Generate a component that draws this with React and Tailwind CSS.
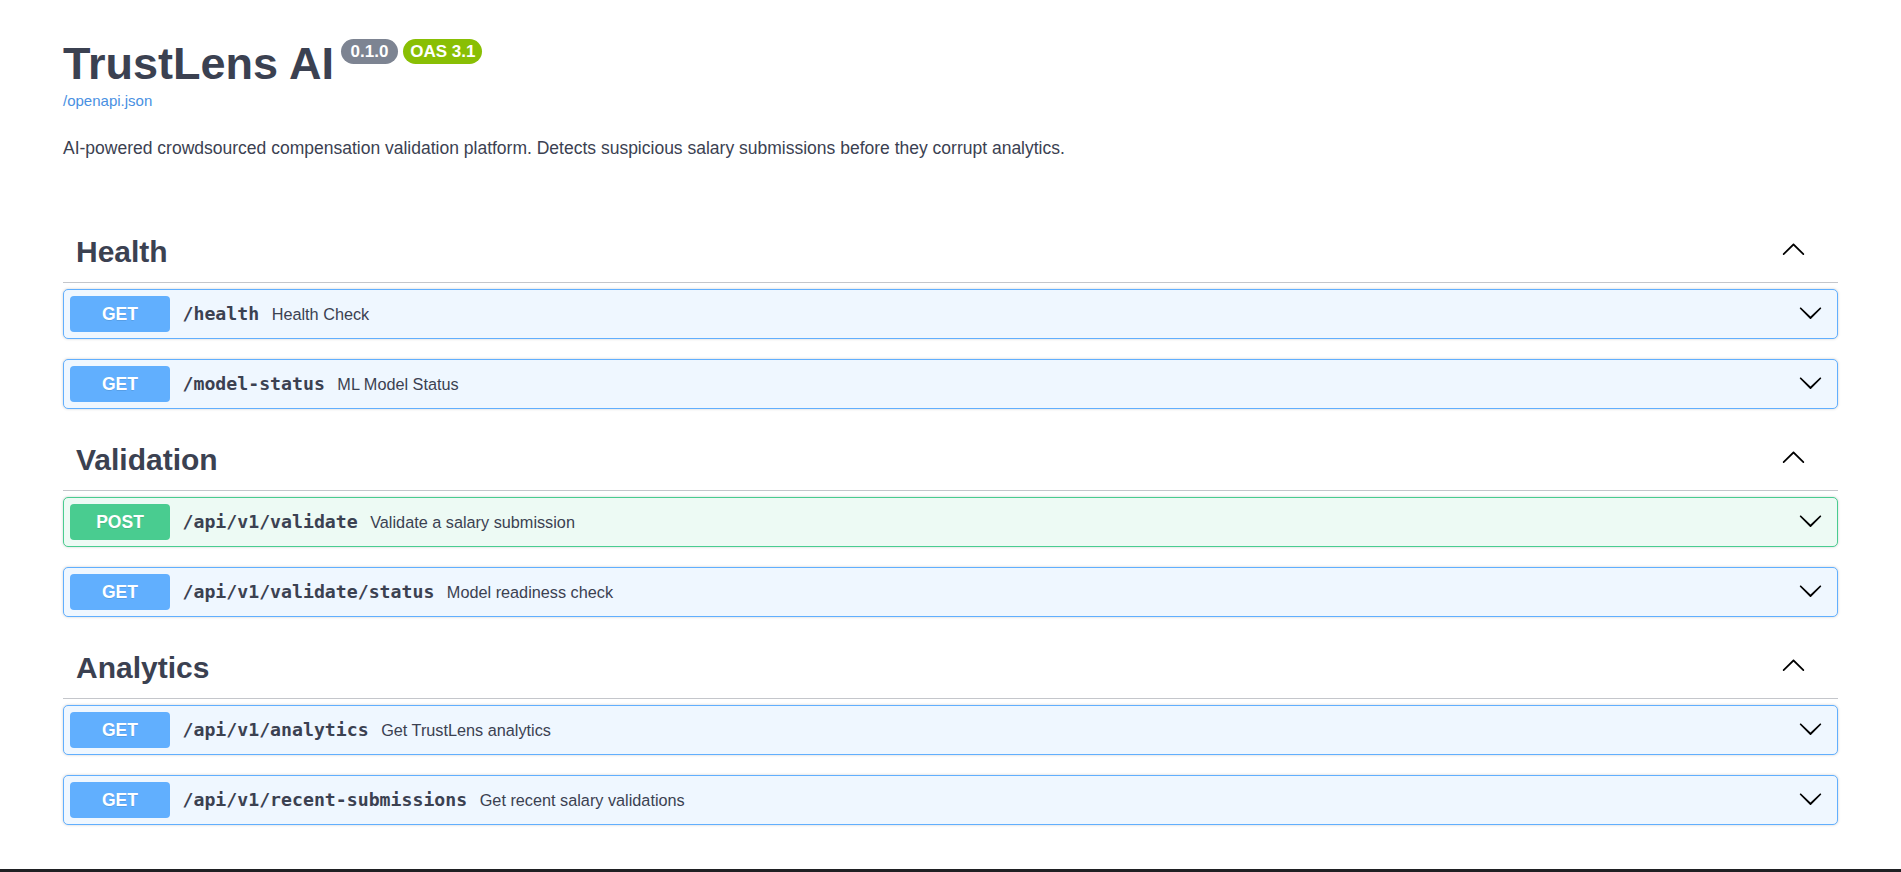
import React from 'react';

// swagger-style docs page for the TrustLens API
const sections = [
  {
    name: 'Health',
    ops: [
      { method: 'GET', path: '/health', summary: 'Health Check' },
      { method: 'GET', path: '/model-status', summary: 'ML Model Status' },
    ],
  },
  {
    name: 'Validation',
    ops: [
      { method: 'POST', path: '/api/v1/validate', summary: 'Validate a salary submission' },
      { method: 'GET', path: '/api/v1/validate/status', summary: 'Model readiness check' },
    ],
  },
  {
    name: 'Analytics',
    ops: [
      { method: 'GET', path: '/api/v1/analytics', summary: 'Get TrustLens analytics' },
      { method: 'GET', path: '/api/v1/recent-submissions', summary: 'Get recent salary validations' },
    ],
  },
];

const ArrowDown = ({ className }) => (
  <svg width="25" height="25" viewBox="0 0 20 20" className={className}>
    <path
      fill="#000"
      d="M17.418 6.109c.272-.268.709-.268.979 0s.271.701 0 .969l-7.908 7.83c-.27.268-.707.268-.979 0l-7.908-7.83c-.27-.268-.27-.701 0-.969.271-.268.709-.268.979 0L10 13.25l7.418-7.141z"
    />
  </svg>
);

const ArrowUp = ({ className }) => (
  <svg width="25" height="25" viewBox="0 0 20 20" className={className}>
    <path
      fill="#000"
      d="M17.418 14.908c.272.268.709.268.979 0s.271-.701 0-.969l-7.908-7.83c-.27-.268-.707-.268-.979 0l-7.908 7.83c-.27.268-.27.701 0 .969.271.268.709.268.979 0L10 7.767l7.418 7.141z"
    />
  </svg>
);

const Operation = ({ op }) => {
  const isPost = op.method === 'POST';
  return (
    <div
      className={`box-border h-[50px] mb-[20px] flex items-center pl-[6px] pr-[14px] border rounded-[5px] shadow-[0_0_3px_rgba(0,0,0,0.19)] ${
        isPost ? 'border-[#49cc90] bg-[#edfaf4]' : 'border-[#61affe] bg-[#eff7ff]'
      }`}
    >
      <span
        className={`w-[100px] h-[36px] flex items-center justify-center rounded-[4px] text-white font-bold text-[17.5px] [text-shadow:0_1px_0_rgba(0,0,0,0.1)] ${
          isPost ? 'bg-[#49cc90]' : 'bg-[#61affe]'
        }`}
      >
        {op.method}
      </span>
      <div className="flex items-baseline">
        <span className="px-[12.5px] font-['DejaVu_Sans_Mono',monospace] font-bold text-[18.2px] text-[#3b4151]">
          {op.path}
        </span>
        <span className="text-[16.25px] text-[#3b4151]">{op.summary}</span>
      </div>
      <ArrowDown className="ml-auto mb-[4px]" />
    </div>
  );
};

const App = () => {
  return (
    <div className="min-h-screen bg-white font-['Liberation_Sans',Arial,sans-serif] text-[#3b4151]">
      <div className="px-[63px] pt-[38px]">
        {/* Info block */}
        <div className="flex items-start">
          <h2 className="m-0 text-[45px] leading-[52px] font-bold">TrustLens AI</h2>
          <span className="ml-[7px] mt-[1px] h-[25px] px-[5px] flex items-center rounded-full bg-[#7d8492] text-white font-bold text-[17px] whitespace-pre">
            {' 0.1.0 '}
          </span>
          <span className="ml-[5px] mt-[1px] h-[25px] px-[7px] flex items-center rounded-full bg-[#89bf04] text-white font-bold text-[17px] whitespace-pre">
            OAS 3.1
          </span>
        </div>
        <a href="#" className="block mt-[1px] text-[15px] leading-[20px] text-[#4990e2] w-fit">
          /openapi.json
        </a>
        <p className="mt-[25px] text-[17.5px] leading-[24px]">
          AI-powered crowdsourced compensation validation platform. Detects suspicious salary submissions before they corrupt analytics.
        </p>

        {/* Tag sections */}
        <div className="mt-[61px]">
          {sections.map((section) => (
            <div key={section.name} className="flex flex-col">
              <div className="box-border h-[62px] flex items-center pl-[13px] pr-[32px] border-b border-[#c4c6cb]">
                <h3 className="text-[30px] leading-[34px] font-bold">{section.name}</h3>
                <ArrowUp className="ml-auto mb-[7px]" />
              </div>
              <div className="mt-[6px]">
                {section.ops.map((op) => (
                  <Operation key={op.path} op={op} />
                ))}
              </div>
            </div>
          ))}
        </div>
      </div>
      <div className="h-[24px]" />
      <div className="h-[40px] bg-[#1f2023]" />
    </div>
  );
};

export default App;
